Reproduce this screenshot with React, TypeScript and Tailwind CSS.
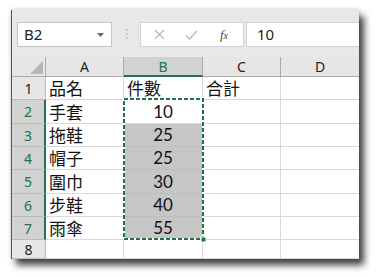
import React from "react";

const CJK = { fontFamily: '"Noto Sans CJK TC", "Noto Sans", sans-serif' };
const UI = { fontFamily: '"Noto Sans", "Open Sans", sans-serif' };
const NUM = { fontFamily: 'Lato, "Noto Sans", sans-serif' };

const rows: { n: number; a: string; b: string; c: string; h: string }[] = [
  { n: 1, a: "品名", b: "件數", c: "合計", h: "h-[23px]" },
  { n: 2, a: "手套", b: "10", c: "", h: "h-[24px]" },
  { n: 3, a: "拖鞋", b: "25", c: "", h: "h-[23px]" },
  { n: 4, a: "帽子", b: "25", c: "", h: "h-[23px]" },
  { n: 5, a: "圍巾", b: "30", c: "", h: "h-[24px]" },
  { n: 6, a: "步鞋", b: "40", c: "", h: "h-[23px]" },
  { n: 7, a: "雨傘", b: "55", c: "", h: "h-[23px]" },
  { n: 8, a: "", b: "", c: "", h: "h-[19px]" },
];

export default function App() {
  return (
    <div className="w-[378px] h-[278px] bg-white pt-[10px] pl-[11px] overflow-hidden">
      <div className="relative w-[348px] h-[249px] overflow-hidden border-l border-[#217346] bg-[#e8e8e8] shadow-[5px_6px_7px_rgba(0,0,0,0.75),0_-1px_4px_rgba(0,0,0,0.15)]">
        {/* formula bar */}
        <div className="h-[47px] flex items-start pt-[12px] pl-[5px]">
          <div
            className="w-[95px] h-[25px] bg-white border border-[#c6c6c6] flex items-center pl-[6px] pr-[7px] text-[15px] text-[#222]"
            style={UI}
          >
            <span className="flex-1">B2</span>
            <svg width="7" height="4" viewBox="0 0 7 4">
              <path d="M0 0 L7 0 L3.5 4 Z" fill="#666" />
            </svg>
          </div>
          <div className="w-[28px] h-[25px] flex items-center justify-center">
            <svg width="3" height="12" viewBox="0 0 3 12">
              <rect x="1" y="0" width="1.5" height="1.5" fill="#b0b0b0" />
              <rect x="1" y="4" width="1.5" height="1.5" fill="#b0b0b0" />
              <rect x="1" y="8" width="1.5" height="1.5" fill="#b0b0b0" />
            </svg>
          </div>
          <div className="w-[104px] h-[25px] bg-white border border-[#d4d4d4] flex items-center">
            <div className="w-[34px] flex justify-center pl-[2px]">
              <svg width="11" height="11" viewBox="0 0 11 11">
                <path d="M1 1 L10 10 M10 1 L1 10" stroke="#b8b8b8" strokeWidth="1.2" fill="none" />
              </svg>
            </div>
            <div className="w-[32px] flex justify-center">
              <svg width="13" height="10" viewBox="0 0 13 10">
                <path d="M1 5.5 L4.5 9 L12 1" stroke="#b8b8b8" strokeWidth="1.3" fill="none" />
              </svg>
            </div>
            <div
              className="w-[34px] flex justify-center text-[13px] italic text-[#444]"
              style={{ fontFamily: '"Liberation Serif", serif' }}
            >
              <span>
                f<span className="text-[10px]">x</span>
              </span>
            </div>
          </div>
          <div
            className="ml-[2px] flex-1 h-[25px] bg-white border border-[#d4d4d4] border-r-0 flex items-center pl-[10px] text-[15px] text-[#222]"
            style={UI}
          >
            10
          </div>
        </div>

        {/* column headers */}
        <div className="flex h-[20px]" style={UI}>
          <div className="w-[34px] h-full bg-[#e6e6e6] border-r border-b border-[#ababab] relative">
            <svg className="absolute right-[2px] bottom-[2px]" width="13" height="13" viewBox="0 0 13 13">
              <path d="M13 0 L13 13 L0 13 Z" fill="#b5b5b5" />
            </svg>
          </div>
          <div className="w-[78px] h-full bg-[#e6e6e6] border-r border-b border-[#ababab] flex items-center justify-center text-[14px] text-[#222]">
            A
          </div>
          <div className="w-[79px] h-full bg-[#d2d2d2] border-r border-[#ababab] border-b-2 border-b-[#217346] flex items-center justify-center text-[14px] text-[#217346]">
            B
          </div>
          <div className="w-[78px] h-full bg-[#e6e6e6] border-r border-b border-[#ababab] flex items-center justify-center text-[14px] text-[#222]">
            C
          </div>
          <div className="w-[78px] h-full bg-[#e6e6e6] border-b border-[#ababab] flex items-center justify-center text-[14px] text-[#222]">
            D
          </div>
        </div>

        {/* rows */}
        {rows.map((r) => {
          const sel = r.n >= 2 && r.n <= 7;
          const active = r.n === 2;
          return (
            <div key={r.n} className={`flex ${r.h}`}>
              <div
                className={
                  sel
                    ? "w-[34px] h-full bg-[#d2d2d2] border-b border-[#bcbcbc] border-r-2 border-r-[#217346] flex items-center justify-center text-[14px] text-[#217346]"
                    : "w-[34px] h-full bg-[#e6e6e6] border-b border-r border-[#bcbcbc] flex items-center justify-center text-[14px] text-[#222]"
                }
                style={UI}
              >
                {r.n}
              </div>
              <div
                className="w-[78px] h-full bg-white border-r border-b border-[#d9d9d9] flex items-center pl-[3px] text-[17px] text-[#111]"
                style={CJK}
              >
                {r.a}
              </div>
              {r.n === 1 ? (
                <div
                  className="w-[79px] h-full bg-white border-r border-b border-[#d9d9d9] flex items-center pl-[3px] text-[17px] text-[#111]"
                  style={CJK}
                >
                  {r.b}
                </div>
              ) : (
                <div
                  className={
                    sel && !active
                      ? "w-[79px] h-full bg-[#c6c6c6] border-r border-b border-[#bdbdbd] flex items-center justify-center text-[17px] text-[#111]"
                      : "w-[79px] h-full bg-white border-r border-b border-[#d9d9d9] flex items-center justify-center text-[17px] text-[#111]"
                  }
                  style={NUM}
                >
                  {r.b}
                </div>
              )}
              <div
                className="w-[78px] h-full bg-white border-r border-b border-[#d9d9d9] flex items-center pl-[3px] text-[17px] text-[#111]"
                style={CJK}
              >
                {r.c}
              </div>
              <div className="w-[78px] h-full bg-white border-b border-[#d9d9d9]" />
            </div>
          );
        })}

        {/* marching ants selection */}
        <svg
          className="absolute left-[110px] top-[87px]"
          width="86"
          height="150"
          viewBox="0 0 86 150"
        >
          <rect x="2" y="2" width="79" height="140" fill="none" stroke="#ffffff" strokeWidth="2" />
          <rect
            x="2"
            y="2"
            width="79"
            height="140"
            fill="none"
            stroke="#217346"
            strokeWidth="2"
            strokeDasharray="4 2"
          />
          <rect x="79" y="140" width="5" height="5" fill="#217346" stroke="#ffffff" strokeWidth="1" />
        </svg>
      </div>
    </div>
  );
}
